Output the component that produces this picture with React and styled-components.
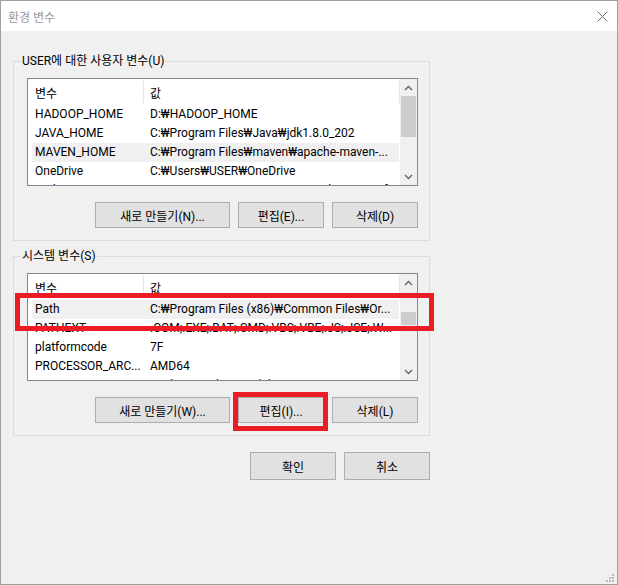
import React from 'react';
import styled, { createGlobalStyle } from 'styled-components';

const GlobalStyle = createGlobalStyle`
  html, body {
    margin: 0;
    padding: 0;
    background: #f0f0f0;
  }
  body {
    font-family: Roboto, "Noto Sans CJK KR", sans-serif;
    font-size: 12px;
    color: #000;
  }
  * {
    box-sizing: border-box;
  }
`;

const Window = styled.div`
  position: relative;
  width: 618px;
  height: 585px;
  border: 1px solid #a0a0a0;
  background: #f0f0f0;
  display: flex;
  flex-direction: column;
  overflow: hidden;
`;

const TitleBar = styled.div`
  height: 30px;
  flex: none;
  background: #fff;
  display: flex;
  align-items: center;
  justify-content: space-between;
  padding: 0 9px 0 7px;
`;

const Title = styled.span`
  color: #999999;
  font-size: 12px;
`;

const Body = styled.div`
  flex: 1;
  display: flex;
  flex-direction: column;
  align-items: flex-start;
  padding: 22px 0 0 12px;
`;

const Group = styled.fieldset`
  width: 417px;
  margin: ${({ $gap }) => `${$gap || 0}px 0 0 0`};
  padding: 0;
  border: 1px solid #dcdcdc;
  min-inline-size: 0;
`;

const Legend = styled.legend`
  margin-left: 7px;
  padding: 0 1px;
  line-height: 16px;
  font-size: 12px;
`;

const GroupContent = styled.div`
  display: flex;
  flex-direction: column;
  gap: 16px;
  padding: 9px 11px 12px 13px;
`;

const ListBox = styled.div`
  width: 391px;
  height: 108px;
  border: 1px solid #828790;
  background: #fff;
  display: flex;
`;

const ListArea = styled.div`
  flex: 1;
  min-width: 0;
  overflow: hidden;
  display: flex;
  flex-direction: column;
`;

const HeaderRow = styled.div`
  display: grid;
  grid-template-columns: 112px 1fr;
  align-items: start;
  height: 26px;
  flex: none;
  padding-left: 4px;
`;

const HeaderCell = styled.div`
  margin-top: 2px;
  height: 22px;
  display: flex;
  align-items: center;
  padding-left: ${({ $value }) => ($value ? '6px' : '3px')};
  border-right: 1px solid #e5e5e5;
`;

const Row = styled.div`
  display: grid;
  grid-template-columns: 112px 1fr;
  height: 19px;
  flex: none;
  margin: 0 1px 0 4px;
  background: ${({ $selected }) => ($selected ? '#f0f0f0' : 'transparent')};
`;

const Cell = styled.div`
  line-height: 19px;
  padding-left: ${({ $value }) => ($value ? '6px' : '3px')};
  white-space: nowrap;
  overflow: ${({ $value }) => ($value ? 'hidden' : 'visible')};
`;

const ScrollBar = styled.div`
  width: 17px;
  flex: none;
  background: #f0f0f0;
  display: flex;
  flex-direction: column;
`;

const Arrow = styled.div`
  height: 17px;
  flex: none;
  display: flex;
  align-items: center;
  justify-content: center;
`;

const Track = styled.div`
  flex: 1;
  display: flex;
  flex-direction: column;
  padding: 0 1px;
`;

const Thumb = styled.div`
  margin-top: ${({ $top }) => $top}px;
  height: ${({ $size }) => $size}px;
  background: #cdcdcd;
`;

const ButtonRow = styled.div`
  display: flex;
  justify-content: flex-end;
  gap: 8px;
  width: ${({ $width }) => ($width ? `${$width}px` : 'auto')};
  margin-top: ${({ $top }) => ($top ? `${$top}px` : '0')};
`;

const Button = styled.button`
  width: ${({ $wide }) => ($wide ? '135px' : '86px')};
  height: ${({ $tall }) => ($tall ? '28px' : '26px')};
  padding: 0;
  background: #e1e1e1;
  border: 1px solid #adadad;
  border-radius: 0;
  font-family: inherit;
  font-size: 12px;
  color: #000;
`;

const Highlight = styled.div`
  position: absolute;
  left: ${({ $x }) => $x}px;
  top: ${({ $y }) => $y}px;
  width: ${({ $w }) => $w}px;
  height: ${({ $h }) => $h}px;
  border: 5px solid #ed1c24;
  pointer-events: none;
`;

const Grip = styled.svg`
  position: absolute;
  right: 2px;
  bottom: 1px;
`;

const Chevron = ({ down }) => (
  <svg width="9" height="6" viewBox="0 0 9 6">
    <polyline
      points={down ? '1,1 4.5,4.5 8,1' : '1,5 4.5,1.5 8,5'}
      fill="none"
      stroke="#606060"
      strokeWidth="1.3"
    />
  </svg>
);

const CloseIcon = () => (
  <svg width="11" height="11" viewBox="0 0 11 11">
    <path d="M0.5 0.5 L10.5 10.5 M10.5 0.5 L0.5 10.5" stroke="#707070" strokeWidth="1" />
  </svg>
);

const VarList = ({ rows, thumbTop, thumbSize }) => (
  <ListBox>
    <ListArea>
      <HeaderRow>
        <HeaderCell>변수</HeaderCell>
        <HeaderCell $value>값</HeaderCell>
      </HeaderRow>
      {rows.map(([name, value, selected]) => (
        <Row key={name + value} $selected={selected}>
          <Cell>{name}</Cell>
          <Cell $value>{value}</Cell>
        </Row>
      ))}
    </ListArea>
    <ScrollBar>
      <Arrow><Chevron /></Arrow>
      <Track>
        <Thumb $top={thumbTop} $size={thumbSize} />
      </Track>
      <Arrow><Chevron down /></Arrow>
    </ScrollBar>
  </ListBox>
);

const userVars = [
  ['HADOOP_HOME', 'D:₩HADOOP_HOME'],
  ['JAVA_HOME', 'C:₩Program Files₩Java₩jdk1.8.0_202'],
  ['MAVEN_HOME', 'C:₩Program Files₩maven₩apache-maven-...', true],
  ['OneDrive', 'C:₩Users₩USER₩OneDrive'],
  ['Path', 'C:₩Users₩USER₩AppData₩Local₩Microsoft₩Win'],
];

const systemVars = [
  ['Path', 'C:₩Program Files (x86)₩Common Files₩Or...', true],
  ['PATHEXT', '.COM;.EXE;.BAT;.CMD;.VBS;.VBE;.JS;.JSE;.W...'],
  ['platformcode', '7F'],
  ['PROCESSOR_ARC...', 'AMD64'],
  ['PROCESSOR_IDE...', 'Intel64 Family 6 Model 158 Stepping 10'],
];

export default function App() {
  return (
    <>
      <GlobalStyle />
      <Window>
        <TitleBar>
          <Title>환경 변수</Title>
          <CloseIcon />
        </TitleBar>
        <Body>
          <Group>
            <Legend>USER에 대한 사용자 변수(U)</Legend>
            <GroupContent>
              <VarList rows={userVars} thumbTop={0} thumbSize={41} />
              <ButtonRow>
                <Button $wide>새로 만들기(N)...</Button>
                <Button>편집(E)...</Button>
                <Button>삭제(D)</Button>
              </ButtonRow>
            </GroupContent>
          </Group>
          <Group $gap={7}>
            <Legend>시스템 변수(S)</Legend>
            <GroupContent>
              <VarList rows={systemVars} thumbTop={21} thumbSize={13} />
              <ButtonRow>
                <Button $wide>새로 만들기(W)...</Button>
                <Button>편집(I)...</Button>
                <Button>삭제(L)</Button>
              </ButtonRow>
            </GroupContent>
          </Group>
          <ButtonRow $width={417} $top={16}>
            <Button $tall>확인</Button>
            <Button $tall>취소</Button>
          </ButtonRow>
        </Body>
        <Highlight $x={14} $y={292} $w={419} $h={38} />
        <Highlight $x={232} $y={391} $w={95} $h={39} />
        <Grip width="9" height="9" viewBox="0 0 9 9">
          <g fill="#b8b8b8">
            <rect x="6" y="0" width="2" height="2" />
            <rect x="3" y="3" width="2" height="2" />
            <rect x="6" y="3" width="2" height="2" />
            <rect x="0" y="6" width="2" height="2" />
            <rect x="3" y="6" width="2" height="2" />
            <rect x="6" y="6" width="2" height="2" />
          </g>
        </Grip>
      </Window>
    </>
  );
}
